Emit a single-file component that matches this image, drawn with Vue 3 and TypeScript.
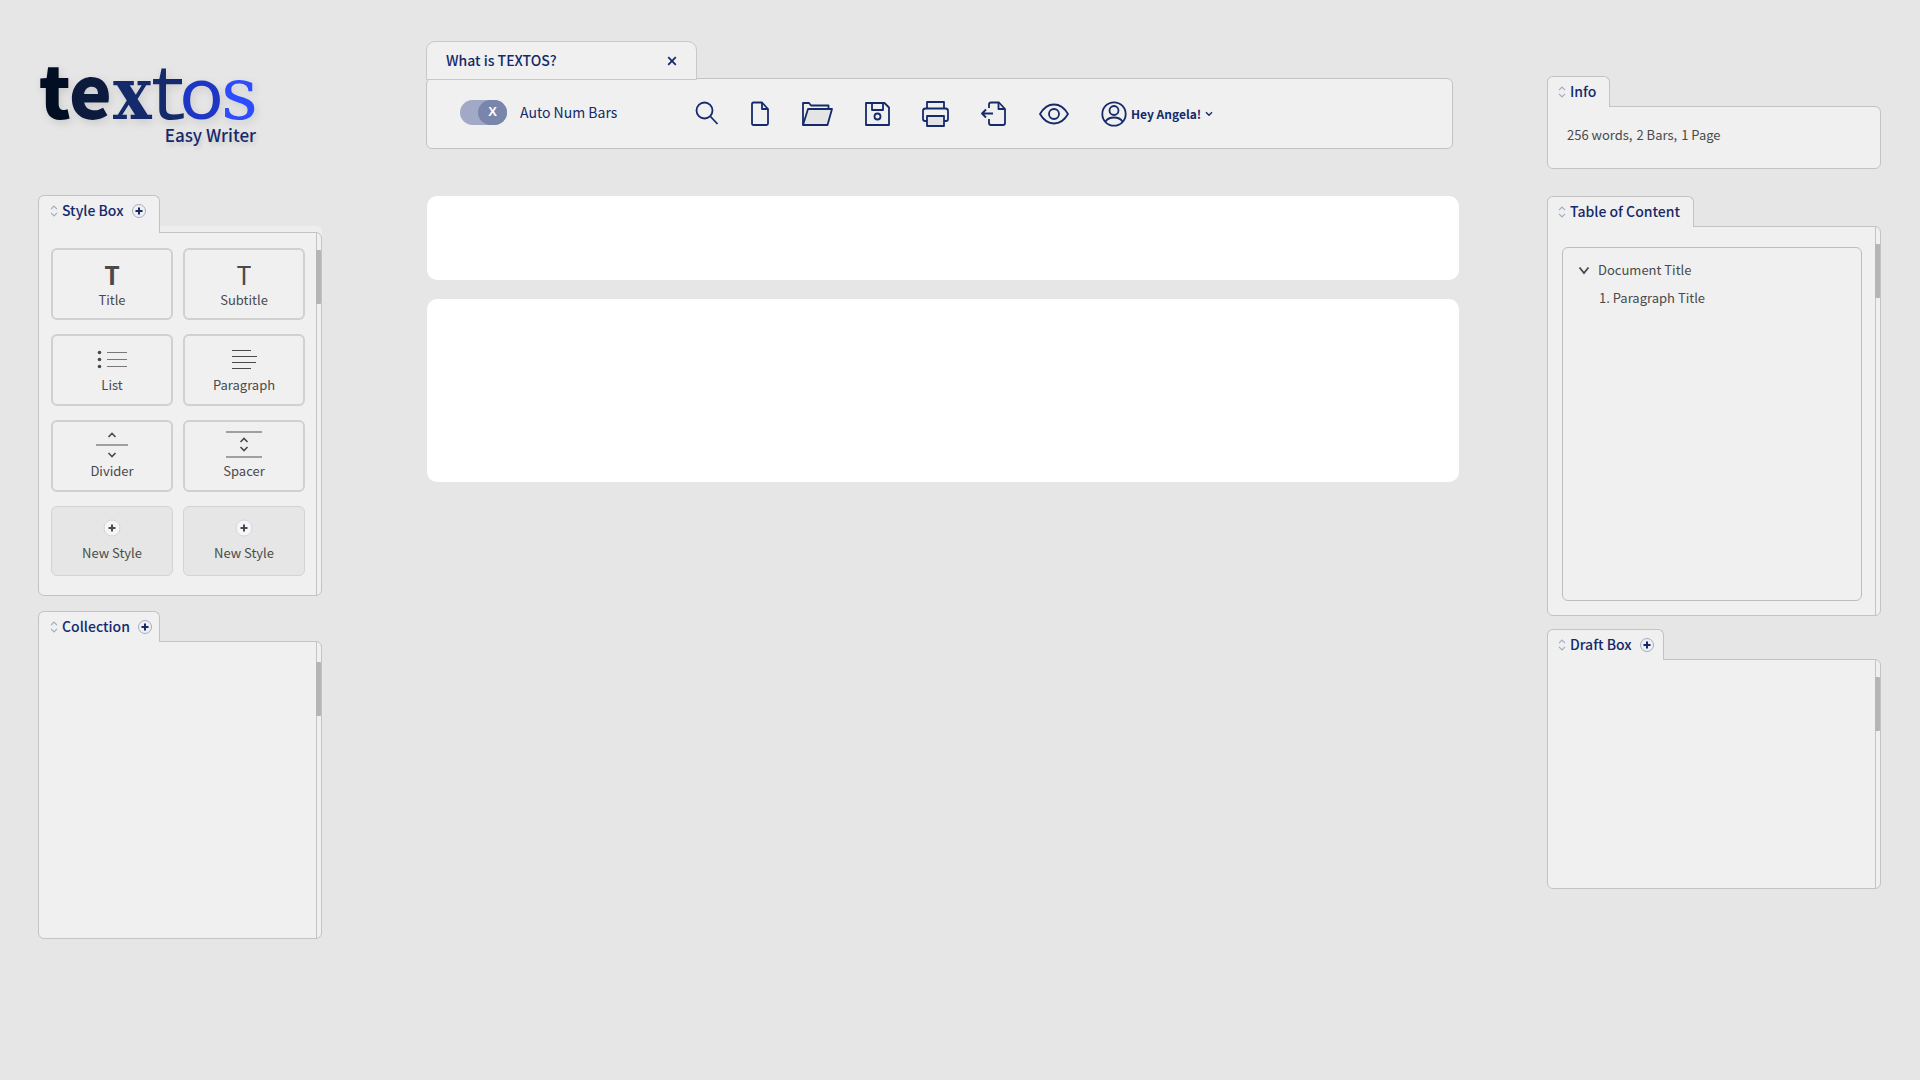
<script setup lang="ts">
import { ref } from 'vue'

interface StyleCard {
  label: string
  icon: 'title' | 'subtitle' | 'list' | 'paragraph' | 'divider' | 'spacer' | 'new'
}

const cards: StyleCard[] = [
  { label: 'Title', icon: 'title' },
  { label: 'Subtitle', icon: 'subtitle' },
  { label: 'List', icon: 'list' },
  { label: 'Paragraph', icon: 'paragraph' },
  { label: 'Divider', icon: 'divider' },
  { label: 'Spacer', icon: 'spacer' },
  { label: 'New Style', icon: 'new' },
  { label: 'New Style', icon: 'new' },
]

const autoNumBars = ref(true)
</script>

<template>
  <div class="page">
    <aside class="left">
      <header class="brand">
        <svg class="logo" width="222" height="62" viewBox="0 0 222 62" role="img" aria-label="textos">
          <text class="l1" x="1" y="55">t</text>
          <text class="l2" x="31" y="55">e</text>
          <text class="l3" x="75" y="55">x</text>
          <text class="l4" x="108" y="55">t</text>
          <text class="l5" x="142" y="55">o</text>
          <text class="l6" x="183" y="55">s</text>
        </svg>
        <p class="tagline">Easy Writer</p>
      </header>

      <section class="panel style-box">
        <div class="tab">
          <svg class="sort" width="8" height="12" viewBox="0 0 8 12"><path d="M1 4.200 4 1.200 7 4.200M1 7.800 4 10.800 7 7.800" /></svg>
          <h2>Style Box</h2>
          <button class="add" aria-label="Add style"><svg width="16" height="16" viewBox="0 0 16 16"><circle cx="8" cy="8" r="6.500" /><path d="M8 4.500v7M4.500 8h7" /></svg></button>
        </div>
        <div class="box">
          <div class="cards">
            <button v-for="(card, i) in cards" :key="i" class="card" :class="{ fresh: card.icon === 'new' }">
              <span v-if="card.icon === 'title'" class="glyph bold">T</span>
              <span v-else-if="card.icon === 'subtitle'" class="glyph">T</span>
              <svg v-else-if="card.icon === 'list'" width="32" height="32" viewBox="0 0 32 32">
                <g fill="#4a4a4a"><circle cx="3.500" cy="9.500" r="1.800" /><circle cx="3.500" cy="16.500" r="1.800" /><circle cx="3.500" cy="23.500" r="1.800" /></g>
                <path d="M11 9.500h20M11 16.500h20M11 23.500h20" stroke="#777" />
              </svg>
              <svg v-else-if="card.icon === 'paragraph'" width="32" height="32" viewBox="0 0 32 32">
                <path d="M4 7.500h19M4 13.500h25M4 19.500h24M4 25.500h19" stroke="#4a4a4a" />
              </svg>
              <svg v-else-if="card.icon === 'divider'" width="32" height="32" viewBox="0 0 32 32">
                <path d="M0 16h32" stroke="#a0a0a0" stroke-width="2" />
                <path d="M12.500 8 16 4.500 19.500 8M12.500 24 16 27.500 19.500 24" stroke="#4a4a4a" stroke-width="1.600" />
              </svg>
              <svg v-else-if="card.icon === 'spacer'" width="36" height="32" viewBox="0 0 36 32">
                <path d="M0 3h36M0 28h36" stroke="#a0a0a0" stroke-width="2" />
                <path d="M14.500 13 18 9.500 21.500 13M14.500 18 18 21.500 21.500 18" stroke="#4a4a4a" stroke-width="1.600" />
              </svg>
              <svg v-else width="18" height="32" viewBox="0 0 18 32">
                <circle cx="9" cy="17" r="8" fill="#f5f6fa" stroke="#d5d5d8" />
                <path d="M9 13.500v7M5.500 17h7" stroke="#4a4a4a" stroke-width="2" />
              </svg>
              <span class="caption">{{ card.label }}</span>
            </button>
          </div>
          <div class="track"><div class="thumb"></div></div>
        </div>
      </section>

      <section class="panel collection">
        <div class="tab">
          <svg class="sort" width="8" height="12" viewBox="0 0 8 12"><path d="M1 4.200 4 1.200 7 4.200M1 7.800 4 10.800 7 7.800" /></svg>
          <h2>Collection</h2>
          <button class="add" aria-label="Add collection"><svg width="16" height="16" viewBox="0 0 16 16"><circle cx="8" cy="8" r="6.500" /><path d="M8 4.500v7M4.500 8h7" /></svg></button>
        </div>
        <div class="box">
          <div class="track"><div class="thumb"></div></div>
        </div>
      </section>
    </aside>

    <main class="center">
      <div class="doc-tab">
        <span>What is TEXTOS?</span>
        <button aria-label="Close document"><svg width="10" height="10" viewBox="0 0 10 10"><path d="M1.200 1.200l7.600 7.600M8.800 1.200l-7.600 7.600" /></svg></button>
      </div>
      <nav class="toolbar">
        <label class="auto">
          <input v-model="autoNumBars" type="checkbox" />
          <span>Auto Num Bars</span>
        </label>
        <div class="tools">
          <button aria-label="Search">
            <svg width="24" height="26" viewBox="0 0 24 26"><circle cx="9.500" cy="9.500" r="8" /><path d="M15.500 15.500 22.500 23" /></svg>
          </button>
          <button aria-label="New document">
            <svg width="19" height="26" viewBox="0 0 19 26"><path d="M2.500 1.500h8.500l6 6.500v14.500q0 1.500-1.500 1.500h-13q-1.500 0-1.500-1.500v-19.500q0-1.500 1.500-1.500z" /><path d="M11 1.500v6.500h6" /></svg>
          </button>
          <button aria-label="Open">
            <svg width="31" height="26" viewBox="0 0 31 26"><path d="M1 24V2h6l2 2.500h17.500V8" /><path d="M1 24 6 8h24l-4.500 16z" fill="#e4e4e4" /></svg>
          </button>
          <button aria-label="Save">
            <svg width="25" height="26" viewBox="0 0 25 26"><path d="M1 2h18.500l4.500 4.500V24H1z" /><path d="M7 2v7h11V2" /><circle cx="12.500" cy="15.500" r="3" /></svg>
          </button>
          <button aria-label="Print">
            <svg width="27" height="26" viewBox="0 0 27 26"><path d="M5 7.500V1h17v6.500" /><path d="M5 20H3q-2 0-2-2v-8q0-2.500 2.500-2.500h20q2.500 0 2.500 2.500v8q0 2-2 2h-2" /><path d="M5 15h17v10H5z" fill="#e2e2e6" /></svg>
          </button>
          <button aria-label="Export">
            <svg width="25" height="26" viewBox="0 0 25 26"><path d="M8 7V3.500q0-2 2-2h8L24 8v14q0 2-2 2H10q-2 0-2-2v-4" /><path d="M17.500 1.500V8H24M12 12.500H1M5 8.500 1 12.500l4 4" /></svg>
          </button>
          <button aria-label="Preview">
            <svg width="31" height="26" viewBox="-1 0 31 26"><path d="M1 13Q6.500 3.500 15 3.500T29 13Q23.500 22.500 15 22.500T1 13z" /><circle cx="15" cy="13" r="5" /></svg>
          </button>
          <button class="user">
            <svg width="26" height="26" viewBox="0 0 26 26"><circle cx="13" cy="13" r="11.700" /><circle cx="13" cy="9.500" r="4.500" /><path d="M4.500 20.500Q7 16.500 13 16.500T21.500 20.500" /></svg>
            <span>Hey Angela!</span>
            <svg width="8" height="6" viewBox="0 0 8 6"><path d="M1 1.300 4 4.300 7 1.300" stroke-width="1.400" /></svg>
          </button>
        </div>
      </nav>
      <article class="bar title-bar"></article>
      <article class="bar body-bar"></article>
    </main>

    <aside class="right">
      <section class="panel info">
        <div class="tab">
          <svg class="sort" width="8" height="12" viewBox="0 0 8 12"><path d="M1 4.200 4 1.200 7 4.200M1 7.800 4 10.800 7 7.800" /></svg>
          <h2>Info</h2>
        </div>
        <div class="box">
          <p class="counts"><span>256 words,</span><span>2 Bars,</span><span>1 Page</span></p>
        </div>
      </section>

      <section class="panel toc">
        <div class="tab">
          <svg class="sort" width="8" height="12" viewBox="0 0 8 12"><path d="M1 4.200 4 1.200 7 4.200M1 7.800 4 10.800 7 7.800" /></svg>
          <h2>Table of Content</h2>
        </div>
        <div class="box">
          <div class="outline">
            <div class="node">
              <svg width="12" height="10" viewBox="0 0 12 10"><path d="M1.500 2.500 6 8 10.500 2.500" stroke="#4a4a4a" stroke-width="1.800" /></svg>
              <span>Document Title</span>
            </div>
            <div class="child">1. Paragraph Title</div>
          </div>
          <div class="track"><div class="thumb"></div></div>
        </div>
      </section>

      <section class="panel draft">
        <div class="tab">
          <svg class="sort" width="8" height="12" viewBox="0 0 8 12"><path d="M1 4.200 4 1.200 7 4.200M1 7.800 4 10.800 7 7.800" /></svg>
          <h2>Draft Box</h2>
          <button class="add" aria-label="Add draft"><svg width="16" height="16" viewBox="0 0 16 16"><circle cx="8" cy="8" r="6.500" /><path d="M8 4.500v7M4.500 8h7" /></svg></button>
        </div>
        <div class="box">
          <div class="track"><div class="thumb"></div></div>
        </div>
      </section>
    </aside>
  </div>
</template>

<style>
body {
  background: #e6e6e6;
}
</style>

<style scoped>
.page {
  display: grid;
  grid-template-columns: 284px minmax(0, 1fr) 334px;
  padding: 0 39px 0 38px;
  align-items: start;
  font-family: 'Noto Sans CJK SC', 'Noto Sans', sans-serif;
  font-size: 13px;
  line-height: 20px;
  color: #4a4a4a;
}
h2,
p {
  margin: 0;
}
button {
  padding: 0;
  border: 0;
  background: none;
  font: inherit;
  color: inherit;
  cursor: pointer;
}
svg {
  display: block;
  flex: none;
  fill: none;
}

.brand {
  height: 131px;
  padding-top: 64px;
}
.logo {
  overflow: visible;
  filter: drop-shadow(2px 3px 4px rgb(0 0 0 / 12%));
}
.logo text {
  stroke: none;
}
.l1 {
  font: 900 72px 'Noto Sans CJK SC', sans-serif;
  fill: #020e22;
}
.l2 {
  font: 900 72px 'Noto Sans CJK SC', sans-serif;
  fill: #0b1a3d;
}
.l3 {
  font: 700 72px 'DejaVu Serif Condensed', 'DejaVu Serif', serif;
  fill: #152a6b;
}
.l4 {
  font: 400 76px 'Liberation Mono', monospace;
  fill: #152a6b;
}
.l5 {
  font: 400 76px Lato, sans-serif;
  fill: #1d36c4;
}
.l6 {
  font: 400 72px 'DejaVu Serif', serif;
  fill: #2c4dff;
}
.tagline {
  width: 218px;
  font-size: 17px;
  font-weight: 500;
  line-height: 18px;
  color: #152a6b;
  text-align: right;
  text-shadow: 2px 3px 4px rgb(0 0 0 / 12%);
}

.tab {
  position: relative;
  z-index: 1;
  display: flex;
  align-items: center;
  box-sizing: border-box;
  width: fit-content;
  height: 31px;
  margin-bottom: -1px;
  padding: 0 8px 0 10px;
  border: 1px solid #c3c3c3;
  border-bottom: 0;
  border-radius: 6px 6px 0 0;
  background: #f0f0f0;
}
.tab h2 {
  margin-left: 4px;
  padding-bottom: 2px;
  font-size: 14px;
  font-weight: 500;
  line-height: 20px;
  color: #152a6b;
  white-space: nowrap;
}
.sort {
  stroke: #a3abc9;
  stroke-width: 1.200;
}
.add {
  margin-left: 7px;
}
.add circle {
  stroke: #a3abc9;
}
.add path {
  stroke: #152a6b;
  stroke-width: 2;
}
.box {
  display: flex;
  justify-content: flex-end;
  box-sizing: border-box;
  border: 1px solid #c3c3c3;
  border-radius: 0 6px 6px 6px;
  background: #f0f0f0;
}
.track {
  width: 4px;
  border-left: 1px solid #c3c3c3;
}
.thumb {
  width: 5px;
  height: 54px;
  margin-top: 17px;
  margin-left: -1px;
  border-radius: 1px;
  background: #b5b5b5;
}

.style-box .tab,
.collection .tab {
  width: 122px;
  padding-left: 11px;
}
.style-box .tab {
  height: 38px;
  padding-bottom: 7px;
}
.style-box .box {
  min-height: 364px;
  box-shadow: 0 -6px 0 #eeeeee;
}
.cards {
  display: grid;
  flex: 1;
  grid-template-columns: 1fr 1fr;
  gap: 14px 10px;
  align-content: start;
  padding: 15px 11px 15px 12px;
}
.card {
  display: flex;
  flex-direction: column;
  align-items: center;
  box-sizing: border-box;
  height: 72px;
  padding-top: 7px;
  border: 2px solid #d0d0d0;
  border-radius: 6px;
}
.card.fresh {
  height: 70px;
  padding-top: 4px;
  border: 1px solid #d3d3d3;
  background: #e6e6e6;
}
.glyph {
  height: 33px;
  font-size: 25px;
  line-height: 34px;
}
.glyph.bold {
  font-weight: 700;
}
.collection {
  margin-top: 15px;
}
.collection .box {
  min-height: 298px;
}
.collection .thumb {
  margin-top: 20px;
}

.center {
  margin: 0 87px 0 104px;
  padding-top: 41px;
  color: #152a6b;
}
.center svg {
  stroke: #152a6b;
  stroke-width: 1.800;
  stroke-linejoin: round;
}
.doc-tab {
  position: relative;
  z-index: 1;
  display: flex;
  align-items: center;
  justify-content: space-between;
  box-sizing: border-box;
  width: 271px;
  height: 39px;
  margin-bottom: -2px;
  padding: 0 19px;
  border: 1px solid #c8c8c8;
  border-radius: 9px 9px 0 0;
  background: #f0f0f0;
  font-size: 14px;
  font-weight: 500;
}
.doc-tab span {
  padding-bottom: 2px;
}
.toolbar {
  display: flex;
  align-items: center;
  box-sizing: border-box;
  height: 71px;
  margin-right: 7px;
  padding: 0 33px;
  border: 1px solid #c3c3c3;
  border-radius: 6px;
  background: #f0f0f0;
}
.auto {
  display: flex;
  align-items: center;
  width: 235px;
  padding-bottom: 2px;
  gap: 13px;
  font-size: 14px;
}
.auto span {
  padding-bottom: 2px;
}
.auto input {
  display: flex;
  flex: none;
  justify-content: flex-end;
  width: 47px;
  height: 25px;
  margin: 0;
  border-radius: 13px;
  appearance: none;
  background: #a1a9c6;
}
.auto input::after {
  width: 29px;
  border-radius: 13px;
  background: #7985ab;
  color: #fff;
  font-size: 13px;
  font-weight: 700;
  line-height: 24px;
  text-align: center;
  content: 'X';
}
.tools {
  display: flex;
  align-items: center;
  gap: 32px;
}
.user {
  display: flex;
  align-items: center;
  gap: 4px;
  font-size: 12px;
  font-weight: 700;
}
.bar {
  margin: 0 1px;
  border-radius: 10px;
  background: #fff;
}
.title-bar {
  min-height: 84px;
  margin-top: 47px;
}
.body-bar {
  min-height: 183px;
  margin-top: 19px;
}

.right {
  padding-top: 76px;
}
.info .box {
  justify-content: flex-start;
  min-height: 63px;
  padding: 18px 19px;
}
.info .tab,
.toc .tab {
  padding-right: 13px;
}
.counts {
  display: flex;
  gap: 4px;
}
.toc {
  margin-top: 27px;
}
.toc .box {
  min-height: 390px;
}
.outline {
  flex: 1;
  margin: 20px 13px 14px 14px;
  padding: 12px 15px;
  border: 1px solid #bdbdbd;
  border-radius: 6px;
}
.node {
  display: flex;
  align-items: center;
  gap: 8px;
}
.child {
  margin-top: 8px;
  padding-left: 21px;
}
.draft {
  margin-top: 13px;
}
.draft .box {
  min-height: 230px;
}
</style>
